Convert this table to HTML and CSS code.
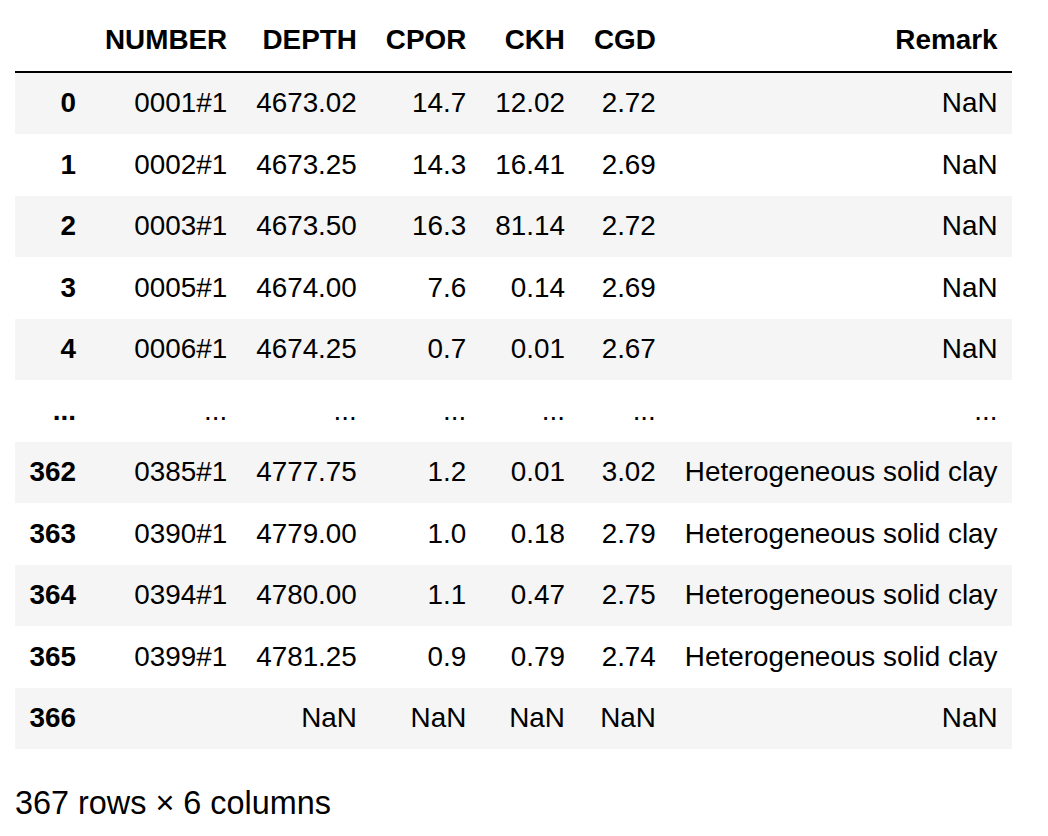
FILE: index.html
```html
<!DOCTYPE html>
<html>
<head>
<meta charset="utf-8">
<link rel="stylesheet" href="styles.css">
</head>
<body>
<div class="output">
<table class="dataframe">
<thead>
<tr><th></th><th>NUMBER</th><th>DEPTH</th><th>CPOR</th><th>CKH</th><th>CGD</th><th>Remark</th></tr>
</thead>
<tbody>
<tr><th>0</th><td>0001#1</td><td>4673.02</td><td>14.7</td><td>12.02</td><td>2.72</td><td>NaN</td></tr>
<tr><th>1</th><td>0002#1</td><td>4673.25</td><td>14.3</td><td>16.41</td><td>2.69</td><td>NaN</td></tr>
<tr><th>2</th><td>0003#1</td><td>4673.50</td><td>16.3</td><td>81.14</td><td>2.72</td><td>NaN</td></tr>
<tr><th>3</th><td>0005#1</td><td>4674.00</td><td>7.6</td><td>0.14</td><td>2.69</td><td>NaN</td></tr>
<tr><th>4</th><td>0006#1</td><td>4674.25</td><td>0.7</td><td>0.01</td><td>2.67</td><td>NaN</td></tr>
<tr><th>...</th><td>...</td><td>...</td><td>...</td><td>...</td><td>...</td><td>...</td></tr>
<tr><th>362</th><td>0385#1</td><td>4777.75</td><td>1.2</td><td>0.01</td><td>3.02</td><td>Heterogeneous solid clay</td></tr>
<tr><th>363</th><td>0390#1</td><td>4779.00</td><td>1.0</td><td>0.18</td><td>2.79</td><td>Heterogeneous solid clay</td></tr>
<tr><th>364</th><td>0394#1</td><td>4780.00</td><td>1.1</td><td>0.47</td><td>2.75</td><td>Heterogeneous solid clay</td></tr>
<tr><th>365</th><td>0399#1</td><td>4781.25</td><td>0.9</td><td>0.79</td><td>2.74</td><td>Heterogeneous solid clay</td></tr>
<tr><th>366</th><td></td><td>NaN</td><td>NaN</td><td>NaN</td><td>NaN</td><td>NaN</td></tr>
</tbody>
</table>
<p class="shape">367 rows × 6 columns</p>
</div>
</body>
</html>
```

FILE: styles.css
```css
html, body {
  margin: 0;
  padding: 0;
  background: #ffffff;
}
body {
  font-family: "Liberation Sans", Arial, Helvetica, sans-serif;
  color: #000000;
}
.output {
  padding: 9px 15px 0 15px;
}
.dataframe {
  border-collapse: collapse;
  border-spacing: 0;
  font-size: 27.85px;
}
.dataframe th,
.dataframe td {
  text-align: right;
  vertical-align: middle;
  padding: 14.5px 14.5px;
  line-height: 32.5px;
  white-space: nowrap;
  border: none;
}
.dataframe th {
  font-weight: bold;
}
.dataframe thead th {
  vertical-align: bottom;
}
.dataframe thead {
  border-bottom: 2px solid #000000;
}
.dataframe tbody tr:nth-child(odd) {
  background: #f5f5f5;
}
.shape {
  margin: 36px 0 0 0;
  font-size: 32.4px;
  line-height: 37px;
}
```
